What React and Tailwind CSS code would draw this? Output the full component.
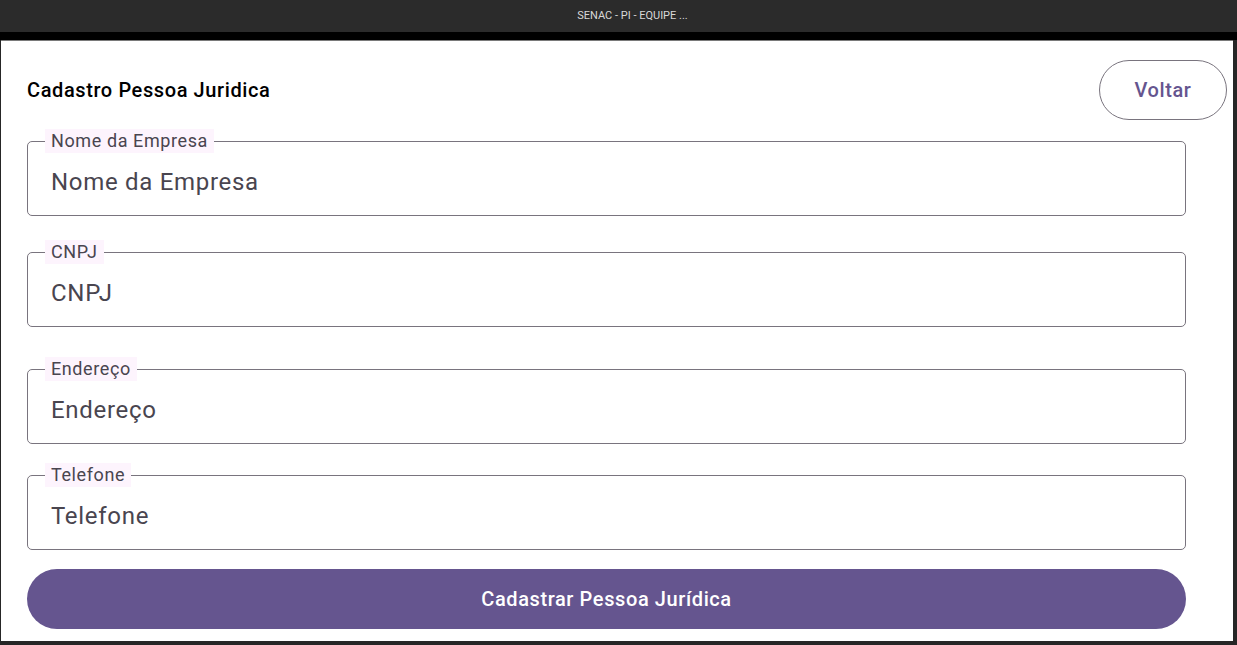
import React from 'react'

const font = { fontFamily: 'Roboto, "Noto Sans", sans-serif' }

// campo com contorno e rótulo sobre a borda
function Campo({ label, className }) {
    return (
        <div className={`relative w-[1159px] ${className}`}>
            <span className="absolute left-[18px] -top-[12px] h-[24px] px-[6px] bg-[#fdf4fd] text-[18px] leading-[24px] tracking-[0.6px] text-[#49454f]">
                {label}
            </span>
            <div className="h-[75px] rounded-[5px] border border-[#79747e] flex items-center pl-[23px] pt-[6px]">
                <span className="text-[24px] tracking-[0.7px] text-[#49454f]">
                    {label}
                </span>
            </div>
        </div>
    )
}

export default function App() {
    return (
        <div className="w-[1237px] h-[645px] flex flex-col bg-[#262626] overflow-hidden" style={font}>
            {/* barra do app */}
            <div className="h-[32px] bg-[#2b2b2b] flex items-center justify-center pl-[28px]">
                <span className="text-[11px] text-[#d8d8d8]">SENAC - PI - EQUIPE ...</span>
            </div>
            <div className="h-[8px] bg-black" />

            <main className="flex-1 ml-[1px] mr-[4px] mb-[4px] bg-white border-t border-[#7a7a7a] pl-[26px] pt-[19px]">
                <div className="flex items-center justify-between pr-[6px]">
                    <h2 className="text-[20px] font-medium tracking-[0.6px] text-black">Cadastro Pessoa Juridica</h2>
                    <button
                        type="button"
                        className="w-[128px] h-[60px] rounded-full border border-[#79747e] text-[20px] font-medium tracking-[0.6px] text-[#65558f]"
                    >
                        Voltar
                    </button>
                </div>

                <Campo label="Nome da Empresa" className="mt-[21px]" />
                <Campo label="CNPJ" className="mt-[36px]" />
                <Campo label="Endereço" className="mt-[42px]" />
                <Campo label="Telefone" className="mt-[31px]" />

                <button
                    type="button"
                    className="mt-[19px] w-[1159px] h-[60px] rounded-full bg-[#65558f] text-white text-[20px] font-medium tracking-[0.6px]"
                >
                    Cadastrar Pessoa Jurídica
                </button>
            </main>
        </div>
    )
}
